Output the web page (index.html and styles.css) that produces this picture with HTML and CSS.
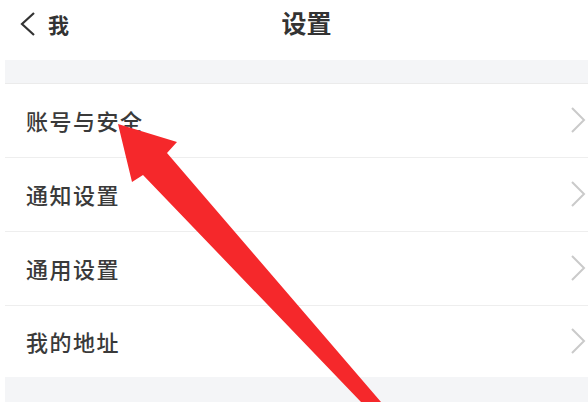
FILE: index.html
```html
<!DOCTYPE html>
<html lang="zh-CN">
<head>
<meta charset="utf-8">
<link rel="stylesheet" href="styles.css">
</head>
<body>
<div class="page">
  <header class="topbar">
    <div class="back">
      <svg class="back-icon" width="16" height="24" viewBox="0 0 16 24"><polyline points="14,1 2,12 14,23" fill="none" stroke="#333" stroke-width="2.2" stroke-linejoin="miter"/></svg>
      <span class="back-text">我</span>
    </div>
    <h1 class="title">设置</h1>
  </header>
  <div class="gap"></div>
  <ul class="list">
    <li class="item"><span class="label">账号与安全</span><svg class="chev" width="16" height="26" viewBox="0 0 16 26"><polyline points="2,1 14,13 2,25" fill="none" stroke="#cacaca" stroke-width="2"/></svg></li>
    <li class="item"><span class="label">通知设置</span><svg class="chev" width="16" height="26" viewBox="0 0 16 26"><polyline points="2,1 14,13 2,25" fill="none" stroke="#cacaca" stroke-width="2"/></svg></li>
    <li class="item"><span class="label">通用设置</span><svg class="chev" width="16" height="26" viewBox="0 0 16 26"><polyline points="2,1 14,13 2,25" fill="none" stroke="#cacaca" stroke-width="2"/></svg></li>
    <li class="item last"><span class="label">我的地址</span><svg class="chev" width="16" height="26" viewBox="0 0 16 26"><polyline points="2,1 14,13 2,25" fill="none" stroke="#cacaca" stroke-width="2"/></svg></li>
  </ul>
  <div class="gap bottom"></div>
  <svg class="arrow" width="588" height="402" viewBox="0 0 588 402">
    <polygon points="118,124 177,142 167,153 381,402 361,402 143,175 132,182" fill="#f5282b"/>
  </svg>
</div>
</body>
</html>
```

FILE: styles.css
```css
* { box-sizing: border-box; }
html, body { margin: 0; padding: 0; background: #fff; }
body {
  width: 588px;
  height: 402px;
  overflow: hidden;
  font-family: "Noto Sans CJK SC", "Noto Sans", sans-serif;
  color: #333;
}
.page {
  position: relative;
  width: 588px;
  height: 402px;
  padding-left: 5px;
}
.topbar {
  height: 60px;
  display: flex;
  align-items: center;
  position: relative;
}
.back {
  display: flex;
  align-items: center;
  padding-left: 15px;
  gap: 12px;
  margin-top: -12px;
}
.back-text {
  font-size: 21px;
  font-weight: 700;
  color: #333;
}
.title {
  position: absolute;
  left: 0;
  right: 0;
  top: 0;
  margin: 0;
  text-align: center;
  padding-left: 20px;
  font-size: 25px;
  font-weight: 700;
  line-height: 44px;
  color: #333;
}
.gap {
  height: 24px;
  background: #f4f5f7;
  border-bottom: 1px solid #ebebeb;
}
.gap.bottom {
  height: 40px;
  border-bottom: none;
}
.list {
  list-style: none;
  margin: 0;
  padding: 0;
}
.item {
  height: 74px;
  display: flex;
  align-items: center;
  justify-content: space-between;
  padding: 0 2px 2px 21px;
  border-bottom: 1px solid #eeeeee;
}
.item.last {
  height: 71px;
  border-bottom: none;
}
.label {
  font-size: 22px;
  font-weight: 500;
  letter-spacing: 1.5px;
  color: #3a3a3a;
}
.chev { display: block; }
.arrow {
  position: absolute;
  left: 0;
  top: 0;
  pointer-events: none;
}
```
